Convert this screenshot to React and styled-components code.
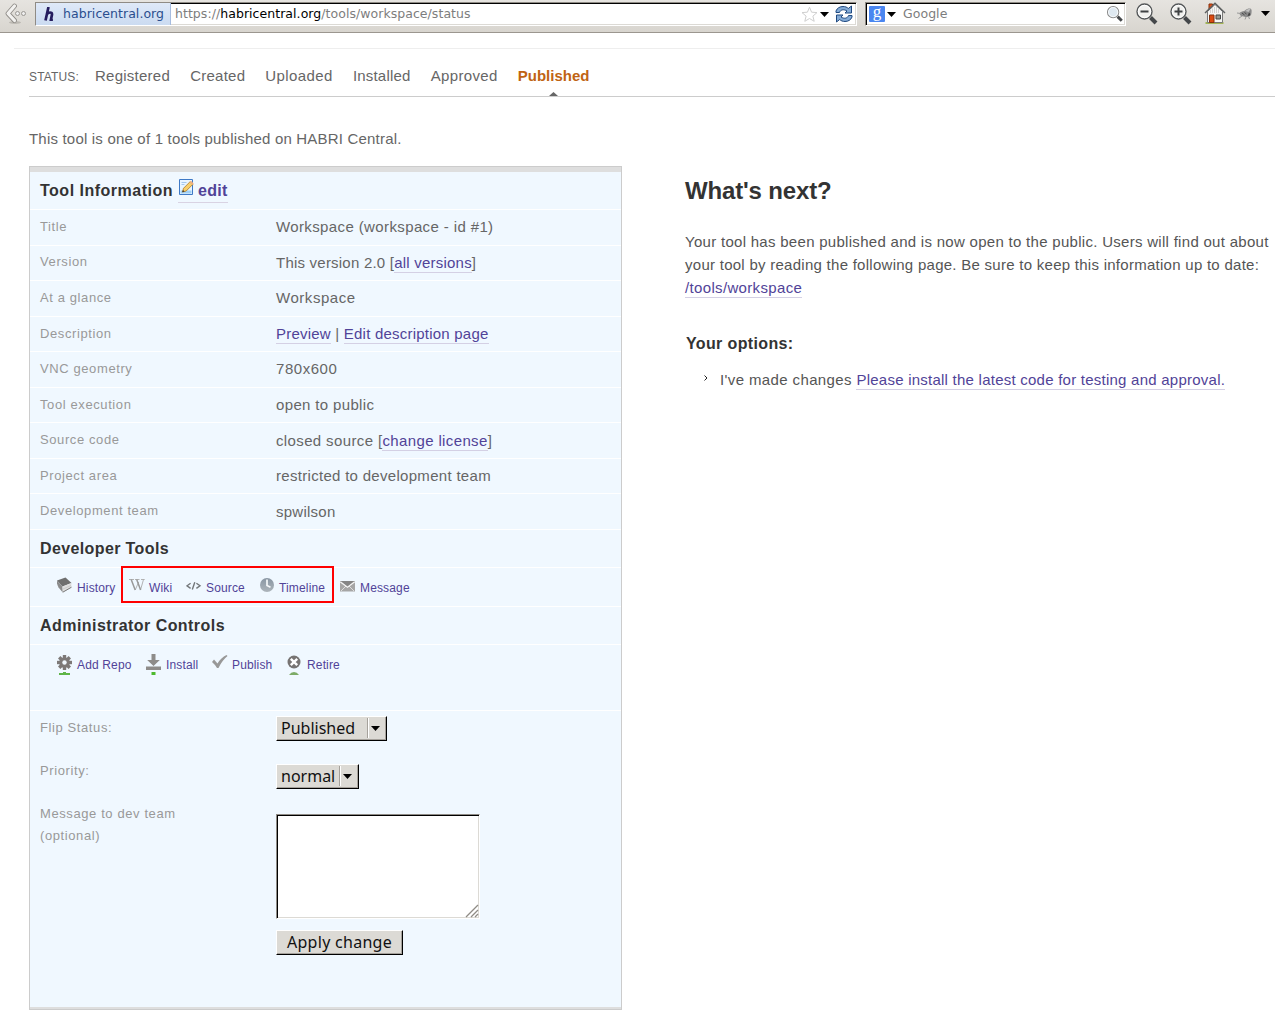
import React from "react";
import styled, { createGlobalStyle, css } from "styled-components";

const Global = createGlobalStyle`
  * { box-sizing: border-box; }
  html, body { margin: 0; padding: 0; background: #fff; overflow: hidden; }
  body { font-family: "Liberation Sans", Arial, Helvetica, sans-serif; font-size: 15px; letter-spacing: 0.195px; color: #666; }
  svg { display: block; flex: none; }
`;

const ui = css`font-family: "DejaVu Sans", Verdana, sans-serif; letter-spacing: 0;`;

/* ---------- browser toolbar ---------- */
const Toolbar = styled.header`
  ${ui}
  height: 33px;
  display: flex;
  align-items: flex-start;
  padding: 2px 0 0 5px;
  background: linear-gradient(#e6e4e0, #d8d5cf);
  border-bottom: 1px solid #9b968f;
  font-size: 12.5px;
`;
const Field = styled.div`
  display: flex;
  align-items: center;
  width: ${(p) => p.$w}px;
  height: 24px;
  margin-left: ${(p) => p.$ml}px;
  background: #fff;
  border: 1px solid;
  border-color: #8f8b85 #fff #fff #8f8b85;
  box-shadow: inset 1px 1px 0 #000, inset -1px -1px 0 #dcdad5;
`;
const Identity = styled.div`
  display: flex;
  align-items: center;
  width: 135px;
  height: 22px;
  padding-left: 8px;
  gap: 9px;
  color: #2a4e8e;
  background: linear-gradient(#dfe9f8, #cbdbf1);
  border-right: 1px solid #a6bcdf;
  line-height: 20px;
  letter-spacing: 0.05px;
  white-space: nowrap;
`;
const Url = styled.div`
  flex: 1;
  padding-left: ${(p) => p.$pl || 4}px;
  color: #7d7d7d;
  line-height: 20px;
  letter-spacing: 0.05px;
  b { font-weight: normal; color: #000; }
`;
const Slot = styled.div`
  margin: ${(p) => p.$m};
`;

/* ---------- page ---------- */
const Page = styled.main`
  margin: 15px 0 0 14px;
  padding-left: 15px;
  border-top: 1px solid #eee;
`;
const StatusBar = styled.nav`
  display: flex;
  align-items: center;
  height: 48px;
  padding-top: 6px;
  border-bottom: 1px solid #ccc;
`;
const StatusLabel = styled.span`
  width: 66px;
  font-size: 12px;
  letter-spacing: 0.15px;
  padding-top: 3px;
`;
const Step = styled.span`
  position: relative;
  margin-right: 20.1px;
  letter-spacing: ${(p) => p.$ls}px;
  white-space: nowrap;
  ${(p) => p.$on && css`color: #bf6313; font-weight: bold;`}
`;
const Pointer = styled.svg`
  position: absolute;
  left: 31px;
  top: 25px;
`;
const Intro = styled.p`
  margin: 0;
  height: 69px;
  padding-top: 33px;
  line-height: 18px;
`;
const Columns = styled.div`
  display: flex;
  align-items: flex-start;
`;
const Panel = styled.section`
  width: 593px;
  height: 844px;
  background: #f0f8ff;
  border: 1px solid #ccc;
  box-shadow: inset 0 5px 0 #dedede, inset 0 -2px 0 #dedede;
  padding-top: 5px;
`;
const Heading = styled.h3`
  display: flex;
  align-items: center;
  margin: 0;
  padding: ${(p) => p.$pt || 0}px 0 0 10px;
  height: 38px;
  border-bottom: 1px solid #fff;
  color: #333;
  font-size: 16px;
  letter-spacing: ${(p) => p.$ls || 0.45}px;
`;
const EditLink = styled.a`
  display: flex;
  margin-left: 5px;
  height: 24px;
  gap: 4px;
  line-height: 24px;
  color: #514398;
  letter-spacing: 0.3px;
  border-bottom: 1px solid #d9d3e3;
`;
const Row = styled.div`
  display: flex;
  align-items: center;
  height: 35.56px;
  padding-left: 10px;
  border-bottom: 1px solid #fff;
  white-space: nowrap;
`;
const Label = styled.span`
  width: 236px;
  font-size: 13px;
  line-height: 22px;
  letter-spacing: 0.6px;
  color: #999;
`;
const RowLabel = styled(Label)`
  padding-bottom: 0.8px;
`;
const Value = styled.span`
  line-height: 20px;
  letter-spacing: ${(p) => p.$ls}px;
`;
const Link = styled.a`
  color: #514398;
  border-bottom: 1px solid #d4d0e4;
  padding-bottom: 1px;
  letter-spacing: ${(p) => (p.$ls === undefined ? "inherit" : p.$ls + "px")};
`;
const Tools = styled.div`
  position: relative;
  display: flex;
  height: ${(p) => p.$h}px;
  padding: 9px 0 0 27px;
  border-bottom: 1px solid #fff;
`;
const Tool = styled.a`
  display: flex;
  gap: 4px;
  width: ${(p) => p.$w}px;
  font-size: 12px;
  line-height: 23px;
  letter-spacing: 0.15px;
  color: #514398;
  white-space: nowrap;
`;
const Highlight = styled.div`
  position: absolute;
  left: 91px;
  top: -2px;
  width: 213px;
  height: 37px;
  border: 2px solid #f00;
`;
const Form = styled.form`
  display: grid;
  grid-template-columns: 236px 1fr;
  padding: 5px 0 0 10px;
`;
const FormLabels = styled.div`
  display: flex;
  flex-direction: column;
  gap: 21px;
  padding-top: 1px;
`;
const Controls = styled.div`
  display: flex;
  flex-direction: column;
  align-items: flex-start;
`;
const raised = css`
  font-family: "Noto Sans", "Open Sans", sans-serif;
  font-size: 16px;
  line-height: 22px;
  color: #111;
  background: #dcdad5;
  border: 1px solid;
  border-color: #fff #000 #000 #fff;
  box-shadow: inset -1px -1px 0 #a5a19b;
`;
const Select = styled.div`
  ${raised}
  display: flex;
  align-items: center;
  justify-content: space-between;
  letter-spacing: 0;
  width: ${(p) => p.$w}px;
  height: 25px;
  margin-bottom: ${(p) => p.$mb}px;
  padding: 0 6px 0 4px;
`;
const Drop = styled.span`
  display: flex;
  align-items: center;
  height: 20px;
  padding-left: 3px;
  border-left: 1px solid #a5a19b;
  box-shadow: inset 1px 0 0 #fff;
`;
const Area = styled.div`
  display: flex;
  align-items: flex-end;
  justify-content: flex-end;
  width: 204px;
  height: 105px;
  margin-bottom: 11px;
  background: #fff;
  border: 1px solid;
  border-color: #8f8b85 #fff #fff #8f8b85;
  box-shadow: inset 1px 1px 0 #000, inset -1px -1px 0 #dcdad5;
`;
const Apply = styled.button`
  ${raised}
  width: 127px;
  height: 25px;
  padding: 0;
  letter-spacing: 0.28px;
`;
const Aside = styled.section`
  padding: 8px 0 0 63px;
  white-space: nowrap;
`;
const Title = styled.h2`
  margin: 0 0 23px;
  color: #333;
  font-size: 24px;
  line-height: 33px;
  letter-spacing: -0.15px;
`;
const Text = styled.p`
  margin: 0;
  line-height: 23px;
  color: #555;
`;
const Line = styled.span`
  display: block;
  letter-spacing: ${(p) => p.$ls}px;
`;
const Options = styled.h4`
  margin: 33px 0 0 1px;
  color: #333;
  font-size: 16px;
  line-height: 23px;
  letter-spacing: 0.36px;
`;
const Item = styled.div`
  display: flex;
  gap: 12px;
  margin-top: 13px;
  padding-left: 19px;
  line-height: 23px;
  letter-spacing: 0.38px;
  color: #555;
`;

/* ---------- icons ---------- */
const Caret = () => (
  <svg width="9" height="5" viewBox="0 0 9 5"><path d="M0 0h9L4.5 5z" fill="#000" /></svg>
);
const BackIcon = () => (
  <svg width="22" height="24" viewBox="0 0 22 24">
    <ellipse cx="10" cy="20.500" rx="6" ry="1.500" fill="#bbb8b2" />
    <path d="M9.500 4 3 11.500l6.500 7" fill="none" stroke="#8d8a86" strokeWidth="4.800" strokeLinecap="round" strokeLinejoin="round" />
    <path d="M9.500 4 3 11.500l6.500 7" fill="none" stroke="#f2f1ef" strokeWidth="3.200" strokeLinecap="round" strokeLinejoin="round" />
    <circle cx="12.500" cy="11.500" r="2" fill="#eee" stroke="#9b9894" />
    <circle cx="18.500" cy="11.500" r="2" fill="#eee" stroke="#9b9894" />
  </svg>
);
const Favicon = () => (
  <svg width="10" height="14" viewBox="0 0 10 14">
    <path d="M4.500 0 1.500 13.500M2.500 8C4 5 8.200 4.500 8 7.500L6.900 13h2" fill="none" stroke="#251c5e" strokeWidth="2.700" />
  </svg>
);
const StarIcon = () => (
  <svg width="17" height="17" viewBox="0 0 17 17">
    <path d="m8.500 1.200 2.100 5 5.400.4-4.100 3.500 1.300 5.200-4.700-2.800-4.700 2.800 1.300-5.200L1 6.600l5.400-.4z" fill="#fff" stroke="#cfcfcf" />
  </svg>
);
const ReloadIcon = () => (
  <svg width="18" height="18" viewBox="0 0 18 18">
    <g fill="#84abd6" stroke="#1e4880" strokeLinejoin="round">
      <path d="M1 7.500V6C2 3 5 1.500 8 1.500c2.300 0 4 .7 5.300 2l3.200-2.500v7H10l2-2C9 4 5.500 4.500 4.500 7.500z" />
      <path d="M17 10.500V12c-1 3-4 4.500-7 4.500-2.300 0-4-.7-5.300-2L1.500 17v-7H8l-2 2c3 2 6.500 1.500 7.500-1.500z" />
    </g>
  </svg>
);
const GoogleBadge = styled.span`
  width: 16px;
  height: 16px;
  margin: 0 2px 0 3px;
  border-radius: 1px;
  background: #4a86f0;
  color: #fff;
  font: 17px/12px "Liberation Serif", serif;
  text-align: center;
`;
const Lens = ({ sign, size = 24, glass = "#f0f0ee", ring = "#55585a" }) => (
  <svg width={size} height={size} viewBox="0 0 24 24" fill="none">
    <path d="m15.500 15.500 5.500 5.500" stroke="#44474a" strokeWidth="4" />
    <circle cx="9.500" cy="9.500" r="7.500" fill={glass} stroke={ring} strokeWidth="1.400" />
    <circle cx="9.500" cy="9.500" r="6.200" stroke="#fff" />
    {sign && <path d={sign === "+" ? "M5.500 9.500h8M9.500 5.500v8" : "M5.500 9.500h8"} stroke="#3f4244" strokeWidth="2" />}
  </svg>
);
const HomeIcon = () => (
  <svg width="22" height="22" viewBox="0 0 22 22">
    <path d="M1.500 21h18" stroke="#8fa82c" strokeWidth="1.500" />
    <path d="M5 2h3.500v6H5z" fill="#e0501a" stroke="#85310c" />
    <path d="M3.500 9.500 11 2.500l7.500 7v11h-15z" fill="#f6f6f5" stroke="#777" />
    <path d="M6.500 8v3M8.500 6.500v4.500M10.500 5v6M12.500 5v6M14.500 7v4" stroke="#d2d2cf" />
    <path d="M1 11 11 1.200 21 11" fill="none" stroke="#5d6061" strokeWidth="1.400" />
    <path d="M5.500 13h4.500v7.500H5.500z" fill="#dc4a10" stroke="#85310c" />
    <path d="M12 13h4.500v4H12z" fill="#979b92" stroke="#454745" />
  </svg>
);
const FlyIcon = () => (
  <svg width="18" height="14" viewBox="0 0 18 14">
    <path d="M4 5.500C6 4 8 4.500 9 3.500 11 1.500 14 1 15 2c1 1 .5 2.500.5 4 0 2.500-2 4-4.500 4s-3-1-5-.8C4 9 3 7 4 5.500z" fill="#8a8a8a" />
    <path d="M9.500 4c2-2 4.500-2.500 5-2L12.500 5z" fill="#c2c2c2" />
    <path d="M13 5.500q2 1 1 3l-2.500.5z" fill="#444" />
    <path d="M5 6.500 1 6M6 9l-3.500 2.500M10 10l-1 2.500M12.500 9.500l1 2.500" stroke="#999" fill="none" />
    <path d="m6 6 2.500 2M8.500 5.500 10.500 7" stroke="#4a4a4a" />
  </svg>
);
const EditIcon = () => (
  <svg width="16" height="17" viewBox="0 0 16 17">
    <path d="M1.500 .5h13v15h-13z" fill="#e9f5ff" stroke="#3e79c6" />
    <path d="M2.500 11.500h11v3h-11z" fill="#9fd0f7" />
    <path d="M3.500 3.500h5M3.500 5.500h3" stroke="#a5c8ee" />
    <path d="m5.500 9.300 6.600-6.600 2.700 2.700L8.200 12l-3.700 1z" fill="#f8cf69" stroke="#ad761e" strokeWidth=".8" />
    <path d="m11.500 3.300 1.500-1.500 2.700 2.700-1.500 1.500z" fill="#efb080" />
    <path d="m4.200 13.300.8-2.300 1.500 1.500z" fill="#333" />
  </svg>
);
const Icon = ({ children, h = 16 }) => <svg width="16" height={h} viewBox={`0 0 16 ${h}`}>{children}</svg>;
const icons = {
  history: (
    <Icon>
      <path d="M0 3.500 8.500.500 14.500 6 5.500 9.500z" fill="#6f6f6f" />
      <path d="M0 3.500 5.500 9.500 5.800 15.500 1.500 10.500Q-.5 7 0 3.500z" fill="#8b8b8b" />
      <path d="m5.500 9.500 9-3.500-.3 4.500-8.400 5z" fill="#dedede" />
      <path d="m5.800 15.200 8.700-5" stroke="#777" />
      <path d="m6 12 8-3.500" stroke="#c3c3c3" strokeWidth=".7" />
    </Icon>
  ),
  wiki: (
    <Icon>
      <path d="M0 2.500h5M6 2.500h4.500M12 2.500h3.700M6.200 13l3.500-8M11.500 13 14.500 2.500" fill="none" stroke="#aaa" strokeWidth=".9" />
      <path d="m2.200 2.500 4 10.500M7.700 2.500l3.900 10.500" stroke="#999" strokeWidth="1.500" />
    </Icon>
  ),
  source: (
    <Icon>
      <path d="M4.600 6.200 1 8.800l3.600 2.600M10.400 6.200 14 8.800l-3.600 2.600M8.800 5.200l-2.500 7.200" fill="none" stroke="#73777a" strokeWidth="1.400" />
    </Icon>
  ),
  timeline: (
    <Icon>
      <defs><linearGradient id="clock" x1="0" y1="0" x2="0" y2="1"><stop stopColor="#8996a3" /><stop offset="1" stopColor="#adb5bb" /></linearGradient></defs>
      <circle cx="8" cy="8" r="7" fill="url(#clock)" />
      <path d="M8 2.500v6l3.500 1.700" fill="none" stroke="#f5f8fa" strokeWidth="1.700" />
    </Icon>
  ),
  message: (
    <Icon>
      <path d="M0 4h15v10.500H0z" fill="#a6a6a6" />
      <path d="M0 4h15L7.500 10z" fill="#858585" />
      <path d="m1 14 5-5M14 14 9 9" stroke="#ddd" />
      <path d="m.3 4.800 7.200 5.400 7.200-5.400" fill="none" stroke="#f3f3f3" strokeWidth="1.300" />
    </Icon>
  ),
  gear: (
    <Icon h={21}>
      <g transform="translate(7.500 8.500)" fill="#7d7978">
        {[0, 45, 90, 135].map((a) => <path key={a} d="M-1.700-7.500h3.400v15h-3.400z" transform={`rotate(${a})`} />)}
        <circle r="5.300" />
        <circle r="2.200" fill="#f0f8ff" />
      </g>
      <path d="M6 18h3v1h4v2H2v-2h4z" fill="#5fb548" />
    </Icon>
  ),
  install: (
    <Icon h={21}>
      <path d="M5.500 0h4v6h4.300l-6.300 6-6.300-6h4.300zM0 12.500h15V16H0z" fill="#8e8c8a" />
      <path d="M5.500 18h4v3h-4z" fill="#4dba2e" />
    </Icon>
  ),
  publish: (
    <Icon h={21}>
      <path d="M0 8 2 5.500 5.500 9.500Q9 3.500 14.500 1L15.500 2Q10 6.500 6.500 14H5Q3 10.500 0 8z" fill="#989898" />
    </Icon>
  ),
  retire: (
    <Icon h={21}>
      <circle cx="7" cy="8" r="6.500" fill="#777473" />
      <path d="m3.800 4.800 6.400 6.400m0-6.400-6.400 6.400" stroke="#fff" strokeWidth="2.400" />
      <path d="M2 21q2-3 5-3t5 3z" fill="#7dab67" />
    </Icon>
  ),
};

const steps = [
  ["Registered", 0.25], ["Created", 0.25], ["Uploaded", 0.4], ["Installed", 0.2], ["Approved", 0.35],
];
const rows = [
  ["Title", "Workspace (workspace - id #1)", 0.38],
  ["Version", <>This version 2.0 [<Link>all versions</Link>]</>, 0.22],
  ["At a glance", "Workspace", 0.55],
  ["Description", <><Link>Preview</Link> | <Link>Edit description page</Link></>, 0.22],
  ["VNC geometry", "780x600", 0.55],
  ["Tool execution", "open to public", 0.35],
  ["Source code", <>closed source [<Link>change license</Link>]</>, 0.37],
  ["Project area", "restricted to development team", 0.3],
  ["Development team", "spwilson", 0.25],
];
const devTools = [
  ["history", "History", 72], ["wiki", "Wiki", 57], ["source", "Source", 73], ["timeline", "Timeline", 81], ["message", "Message", 80],
];
const adminTools = [
  ["gear", "Add Repo", 89], ["install", "Install", 66], ["publish", "Publish", 75], ["retire", "Retire", 70],
];

export default function App() {
  return (
    <>
      <Global />
      <Toolbar>
        <BackIcon />
        <Field $w={822} $ml={8}>
          <Identity><Favicon />habricentral.org</Identity>
          <Url>https://<b>habricentral.org</b>/tools/workspace/status</Url>
          <StarIcon />
          <Slot $m="0 6px 0 2px"><Caret /></Slot>
          <Slot $m="0 3px 0 0"><ReloadIcon /></Slot>
        </Field>
        <Field $w={261} $ml={8}>
          <GoogleBadge>g</GoogleBadge>
          <Caret />
          <Url $pl={7}>Google</Url>
          <Slot $m="0 1px 0 0"><Lens size={18} ring="#888" glass="#dfe9f1" /></Slot>
        </Field>
        <Slot $m="0 0 0 9px"><Lens sign="-" /></Slot>
        <Slot $m="0 0 0 10px"><Lens sign="+" /></Slot>
        <Slot $m="0 0 0 11px"><HomeIcon /></Slot>
        <Slot $m="5px 0 0 10px"><FlyIcon /></Slot>
        <Slot $m="9px 0 0 7px"><Caret /></Slot>
      </Toolbar>
      <Page>
        <StatusBar>
          <StatusLabel>STATUS:</StatusLabel>
          {steps.map(([s, ls]) => <Step key={s} $ls={ls}>{s}</Step>)}
          <Step $on $ls={0}>
            Published
            <Pointer width="9" height="4" viewBox="0 0 9 4"><path d="M0 4 4.500 0 9 4z" fill="#666" /></Pointer>
          </Step>
        </StatusBar>
        <Intro>This tool is one of 1 tools published on HABRI Central.</Intro>
        <Columns>
          <Panel>
            <Heading $ls={0.5}>Tool Information<EditLink><EditIcon />edit</EditLink></Heading>
            {rows.map(([l, v, ls]) => <Row key={l}><RowLabel>{l}</RowLabel><Value $ls={ls}>{v}</Value></Row>)}
            <Heading $pt={2} $ls={0.38}>Developer Tools</Heading>
            <Tools $h={39}>
              {devTools.map(([i, t, w]) => <Tool key={t} $w={w}>{icons[i]}{t}</Tool>)}
              <Highlight />
            </Tools>
            <Heading $pt={2}>Administrator Controls</Heading>
            <Tools $h={66}>
              {adminTools.map(([i, t, w]) => <Tool key={t} $w={w}>{icons[i]}{t}</Tool>)}
            </Tools>
            <Form>
              <FormLabels>
                <Label>Flip Status:</Label>
                <Label>Priority:</Label>
                <Label>Message to dev team<br />(optional)</Label>
              </FormLabels>
              <Controls>
                <Select $w={111} $mb={23}>Published<Drop><Caret /></Drop></Select>
                <Select $w={83} $mb={25}>normal<Drop><Caret /></Drop></Select>
                <Area>
                  <svg width="14" height="14" viewBox="0 0 14 14"><path d="M1 13 13 1M6 13l7-7M10 13l3-3" stroke="#8f8b85" strokeWidth="1.300" /></svg>
                </Area>
                <Apply type="button">Apply change</Apply>
              </Controls>
            </Form>
          </Panel>
          <Aside>
            <Title>What's next?</Title>
            <Text>
              <Line $ls={0.29}>Your tool has been published and is now open to the public. Users will find out about</Line>
              <Line $ls={0.27}>your tool by reading the following page. Be sure to keep this information up to date:</Line>
              <Link $ls={0.34}>/tools/workspace</Link>
            </Text>
            <Options>Your options:</Options>
            <Item>
              <Slot $m="7px 0 0 0"><svg width="4" height="6" viewBox="0 0 4 6"><path d="m.5.500 2.500 2.500L.5 5.500" fill="none" stroke="#222" /></svg></Slot>
              <span>I've made changes <Link $ls={0.24}>Please install the latest code for testing and approval.</Link></span>
            </Item>
          </Aside>
        </Columns>
      </Page>
    </>
  );
}
